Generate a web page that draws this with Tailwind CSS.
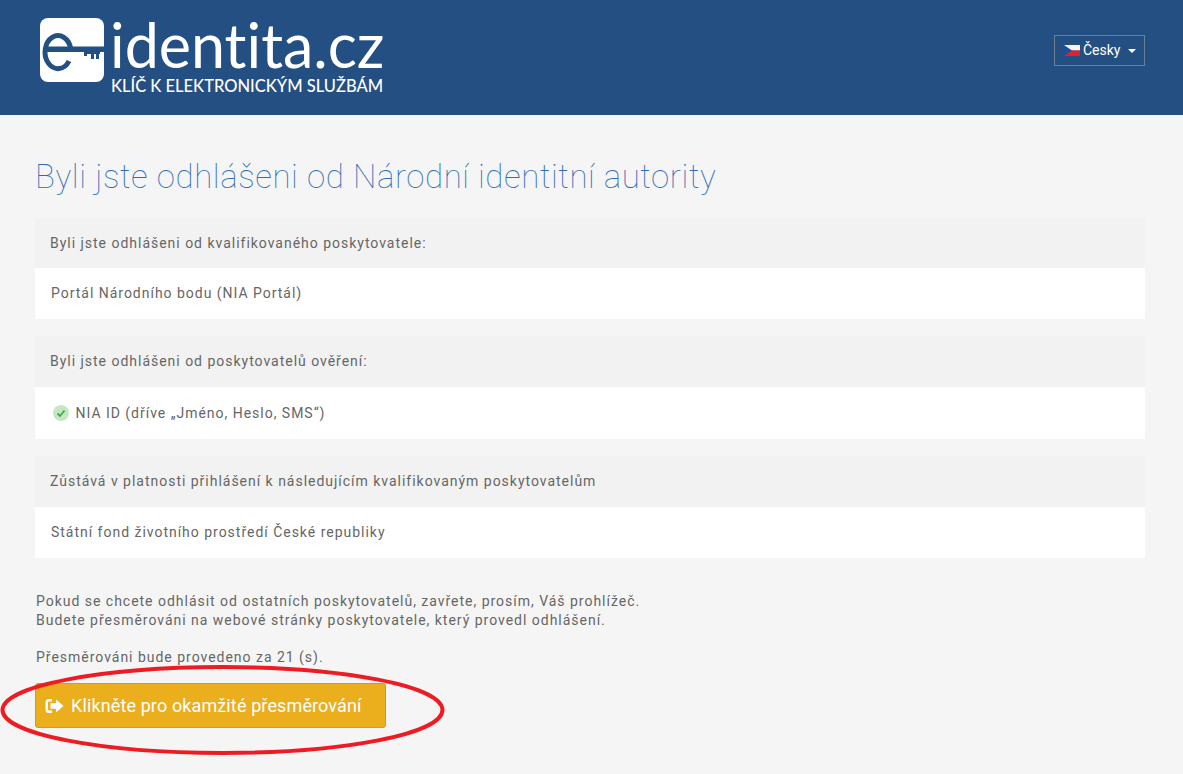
<!DOCTYPE html>
<html lang="en">
<head>
    <meta charset="UTF-8">
    <meta name="viewport" content="width=device-width, initial-scale=1.0">
    <title>Odhlášení</title>
    <script src="https://cdn.jsdelivr.net/npm/@tailwindcss/browser@4"></script>
</head>
<body class="relative h-[774px] overflow-hidden bg-[#f5f5f5] font-['Roboto',sans-serif] text-[14px] tracking-[0.98px] text-[#666]">
    <!-- Header -->
    <header class="flex h-[115px] items-start justify-between bg-[#244f82] pl-[40px] pr-[38px]">
        <div class="flex pt-[18px]">
            <svg class="h-[64px] w-[64px]" viewBox="0 0 64 64">
                <rect width="64" height="64" rx="8" fill="#fff"/>
                <path d="M29 43A13 16.500 0 1 1 30.800 31" fill="none" stroke="#244f82" stroke-width="5"/>
                <path d="M4 28.500H64V34H60V36H59V41H56V36H54V41H51V36H47V38H44V34H4Z" fill="#244f82"/>
            </svg>
            <div class="ml-[7px] flex flex-col font-['Lato',sans-serif] tracking-normal text-white [font-variant-ligatures:none]">
                <span class="mt-[-3px] ml-[-1px] text-[61px] leading-[60px]">identita.cz</span>
                <span class="mt-[0px] text-[16.500px] leading-[22px] font-medium">KLÍČ K ELEKTRONICKÝM SLUŽBÁM</span>
            </div>
        </div>
        <button class="mt-[35px] flex h-[31px] w-[91px] items-center border border-[#6f7f93] pl-[9px] text-[14px] tracking-normal text-white">
            <svg class="mr-[3px] h-[11px] w-[16px]" viewBox="0 0 16 11">
                <rect width="16" height="5.500" fill="#f5f5f5"/>
                <rect y="5.500" width="16" height="5.500" fill="#e3212b"/>
                <path d="M0 0L8 5.500L0 11Z" fill="#1d4f9c"/>
            </svg>
            Česky
            <span class="ml-[8px] h-0 w-0 border-x-[4px] border-t-[4px] border-x-transparent border-t-white"></span>
        </button>
    </header>

    <main class="px-[35px] pr-[38px]">
        <h1 class="mt-[41px] text-[33px] leading-[42px] font-thin tracking-[0.6px] text-[#2e6db4]">Byli jste odhlášeni od Národní identitní autority</h1>

        <section class="mt-[20px]">
            <div class="flex h-[50px] items-center bg-[#f2f2f2] px-[15px]">Byli jste odhlášeni od kvalifikovaného poskytovatele:</div>
            <div class="flex h-[51px] items-center bg-white px-[16px]">Portál Národního bodu (NIA Portál)</div>
        </section>

        <section class="mt-[17px]">
            <div class="flex h-[51px] items-center bg-[#f2f2f2] px-[15px]">Byli jste odhlášeni od poskytovatelů ověření:</div>
            <div class="flex h-[52px] items-center bg-white px-[18px]">
                <svg class="mr-[6.500px] h-[16px] w-[16px]" viewBox="0 0 16 16">
                    <circle cx="8" cy="8" r="8" fill="#c5e6c5"/>
                    <path d="M4.500 8.500L7 11L11.500 5.500" fill="none" stroke="#3fae49" stroke-width="1.800"/>
                </svg>
                NIA ID (dříve „Jméno, Heslo, SMS“)
            </div>
        </section>

        <section class="mt-[17px]">
            <div class="flex h-[51px] items-center bg-[#f2f2f2] px-[15px]">Zůstává v platnosti přihlášení k následujícím kvalifikovaným poskytovatelům</div>
            <div class="flex h-[51px] items-center bg-white px-[16px]">Státní fond životního prostředí České republiky</div>
        </section>

        <p class="mt-[34px] pl-[1px] leading-[19px]">Pokud se chcete odhlásit od ostatních poskytovatelů, zavřete, prosím, Váš prohlížeč.<br>Budete přesměrováni na webové stránky poskytovatele, který provedl odhlášení.</p>
        <p class="mt-[18px] pl-[1px] leading-[19px]">Přesměrováni bude provedeno za 21 (s).</p>

        <button class="mt-[16px] flex h-[45px] w-[351px] items-center rounded-[3px] border border-[#c99f22] bg-[#ebae1c] pl-[9px] text-[18px] tracking-[0.12px] text-white">
            <svg class="mr-[7px] h-[18px] w-[19px]" viewBox="0 0 19 18" fill="#fff">
                <path d="M7 2H4A3.500 3.500 0 0 0 .5 5.500V12.500A3.500 3.500 0 0 0 4 16H7V13.500H4A1 1 0 0 1 3 12.500V5.500A1 1 0 0 1 4 4.500H7Z"/>
                <path d="M11 2.500L18.500 9L11 15.500V11.800H5.500V6.200H11Z"/>
            </svg>
            Klikněte pro okamžité přesměrování
        </button>
    </main>

    <!-- Hand-drawn highlight around the button -->
    <svg class="absolute top-[660px] left-0 h-[114px] w-[460px]" viewBox="0 0 460 114">
        <ellipse cx="222.500" cy="50" rx="220" ry="43" fill="none" stroke="#ed1c24" stroke-width="4"/>
    </svg>
</body>
</html>
